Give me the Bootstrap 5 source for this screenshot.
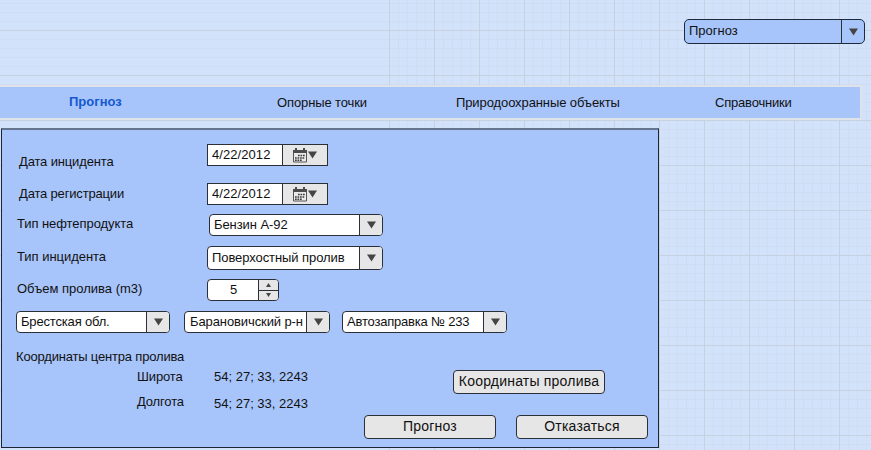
<!DOCTYPE html>
<html lang="ru">
<head>
<meta charset="utf-8">
<meta name="viewport" content="width=device-width, initial-scale=1">
<title>Прогноз</title>
<link href="https://cdn.jsdelivr.net/npm/bootstrap@5.3.0/dist/css/bootstrap.min.css" rel="stylesheet">
<style>
  html, body { height: 450px; }
  body {
    font: 13px/16px "Liberation Sans", Arial, sans-serif;
    color: #111;
    overflow: hidden;
    background-color: #d3e2fb;
    background-image:
      linear-gradient(#c7d2e1 1px, transparent 1px),
      linear-gradient(90deg, #c7d2e1 1px, transparent 1px),
      linear-gradient(#cfdcf2 1px, transparent 1px),
      linear-gradient(90deg, #cfdcf2 1px, transparent 1px);
    background-size: 45px 45px, 45px 45px, 9px 9px, 9px 9px;
    background-position: 0 30px, 29px 0, 0 3px, 2px 0;
  }
  /* the left part of the sheet is ruled horizontally only */
  .sheet {
    height: 450px;
    background:
      linear-gradient(#c7d2e1 1px, transparent 1px) 0 30px / 389px 45px repeat-y,
      linear-gradient(#cfdcf2 1px, transparent 1px) 0 3px / 389px 9px repeat-y,
      linear-gradient(#d3e2fb, #d3e2fb) 0 0 / 389px 450px no-repeat;
  }
  .topbar { height: 85px; padding: 19px 6px 0 0; }
  .tabs-bar {
    width: 862px; height: 35px;
    background: #a8c5fb;
    border: solid #dfe2e8; border-width: 2px 2px 2px 0;
  }
  .tabs-bar .nav-link { flex: none; padding: 8px 0 0; color: #111; line-height: 16px; white-space: nowrap; }
  .tabs-bar .nav-link.active { color: #1559cf; font-weight: 700; padding-top: 7px; }
  .tab-1 { width: 208px; margin-left: 69px; }
  .tab-2 { width: 179px; letter-spacing: -.12px; }
  .tab-3 { width: 259px; letter-spacing: -.1px; }
  .tab-4 { letter-spacing: -.2px; }

  .panel {
    width: 658px; height: 320px; margin: 8px 0 0 1px; padding: 14px 10px 0 14px;
    background: #a8c5fb;
    border: 1px solid #1d2535; border-top: 2px solid #66758f;
  }
  .line-label { width: 191px; flex: none; }
  .line-1 { height: 39px; } .line-1 .line-label { padding: 10px 0 0 3px; letter-spacing: -.15px; }
  .line-2 { height: 31px; } .line-2 .line-label { padding: 3px 0 0 3px; letter-spacing: -.17px; }
  .line-3 { height: 32px; } .line-3 .line-label { padding: 2px 0 0 1px; width: 193px; letter-spacing: -.07px; }
  .line-4 { height: 33px; } .line-4 .line-label { padding: 3px 0 0 1px; letter-spacing: -.03px; }
  .line-5 { height: 32px; } .line-5 .line-label { padding: 2px 0 0 1px; }
  .line-6 { height: 38px; }

  .combo {
    height: 22px; flex: none; overflow: hidden; white-space: nowrap;
    background: #fff; border: 1px solid #2b2f38; border-radius: 4px;
  }
  .combo-text { flex: 1 1 0; min-width: 0; padding: 2px 0 0 4px; }
  .combo-arrow { width: 23px; background: #e6e6e6; border-left: 1px solid #2b2f38; }
  .combo-main { width: 181px; height: 25px; background: #a8c5fb; border-radius: 5px; border-color: #1d2a3c; }
  .combo-main .combo-text { padding-top: 3px; }
  .combo-main .combo-arrow { background: none; }
  .combo-date { width: 121px; border-radius: 0; }
  .combo-date .combo-text { letter-spacing: .07px; }
  .combo-date .combo-arrow { width: 45px; gap: 1px; padding-right: 1px; }
  .combo-oil { width: 174px; letter-spacing: -.08px; }
  .combo-kind { width: 176px; height: 24px; letter-spacing: -.08px; }
  .combo-kind .combo-text { padding-top: 3px; }
  .combo-region { width: 154px; letter-spacing: -.17px; margin-right: 14px; }
  .combo-district { width: 146px; margin-right: 12px; letter-spacing: -.1px; }
  .combo-district .combo-text { padding-left: 5px; }
  .combo-station { width: 165px; letter-spacing: -.2px; }
  .spin { width: 72px; }
  .spin .combo-text { padding-left: 1px; }
  .spin-keys { width: 20px; background: #e6e6e6; border-left: 1px solid #2b2f38; }
  .spin-keys > div + div { border-top: 1px solid #2b2f38; }

  .coords-title { letter-spacing: -.18px; height: 20px; }
  .coords { height: 46px; }
  .coord-names { width: 77px; margin-left: 121px; letter-spacing: -.15px; }
  .coord-gap-a { margin-bottom: 9px; } .coord-gap-b { margin-bottom: 11px; }
  .panel .btn {
    padding: 0 0 2px; height: 24px; flex: none;
    font-size: 14px; line-height: 18px; letter-spacing: .2px; color: #111;
    background: #e6e6e6; border: 1px solid #2b2f38; border-radius: 4px;
  }
  .panel .btn-point { width: 152px; margin: 1px 43px 0 auto; }
  .panel .btn-wide { width: 132px; }
  .actions { gap: 20px; }
</style>
</head>
<body>
<svg width="0" height="0" class="d-none">
  <symbol id="down" viewBox="0 0 9 8"><path d="M0 .5h9L4.500 7.500z" fill="#444"/></symbol>
  <symbol id="cal" viewBox="0 0 14 15">
    <path d="M0 2h14v3.500H0zM2 0h2v3H2zM10 0h2v3h-2z" fill="#4c4c4c"/>
    <path d="M.5 5v9h13V5" fill="#e9e9e9" stroke="#555"/>
    <path d="M5 7.500h7M2 10h10M2 12.300h7" stroke="#3c3c3c" stroke-width="1.600" stroke-dasharray="1.700 .8" fill="none"/>
  </symbol>
</svg>
<div class="sheet">
  <header class="topbar d-flex justify-content-end align-items-start">
    <div class="combo combo-main d-flex">
      <div class="combo-text">Прогноз</div>
      <div class="combo-arrow d-flex align-items-center justify-content-center"><svg width="9" height="8"><use href="#down"/></svg></div>
    </div>
  </header>

  <nav class="tabs-bar nav flex-nowrap">
    <a class="nav-link active tab-1" href="#">Прогноз</a>
    <a class="nav-link tab-2" href="#">Опорные точки</a>
    <a class="nav-link tab-3" href="#">Природоохранные объекты</a>
    <a class="nav-link tab-4" href="#">Справочники</a>
  </nav>

  <main class="panel">
    <div class="line-1 d-flex align-items-start">
      <div class="line-label">Дата инцидента</div>
      <div class="combo combo-date d-flex">
        <div class="combo-text">4/22/2012</div>
        <div class="combo-arrow d-flex align-items-center justify-content-center"><svg width="14" height="15"><use href="#cal"/></svg><svg width="9" height="8"><use href="#down"/></svg></div>
      </div>
    </div>
    <div class="line-2 d-flex align-items-start">
      <div class="line-label">Дата регистрации</div>
      <div class="combo combo-date d-flex">
        <div class="combo-text">4/22/2012</div>
        <div class="combo-arrow d-flex align-items-center justify-content-center"><svg width="14" height="15"><use href="#cal"/></svg><svg width="9" height="8"><use href="#down"/></svg></div>
      </div>
    </div>
    <div class="line-3 d-flex align-items-start">
      <div class="line-label">Тип нефтепродукта</div>
      <div class="combo combo-oil d-flex">
        <div class="combo-text">Бензин А-92</div>
        <div class="combo-arrow d-flex align-items-center justify-content-center"><svg width="9" height="8"><use href="#down"/></svg></div>
      </div>
    </div>
    <div class="line-4 d-flex align-items-start">
      <div class="line-label">Тип инцидента</div>
      <div class="combo combo-kind d-flex">
        <div class="combo-text">Поверхостный пролив</div>
        <div class="combo-arrow d-flex align-items-center justify-content-center"><svg width="9" height="8"><use href="#down"/></svg></div>
      </div>
    </div>
    <div class="line-5 d-flex align-items-start">
      <div class="line-label">Объем пролива (m3)</div>
      <div class="combo spin d-flex">
        <div class="combo-text text-center">5</div>
        <div class="spin-keys d-flex flex-column">
          <div class="flex-fill d-flex align-items-center justify-content-center"><svg width="5" height="4"><path d="M0 4h5L2.500 0z" fill="#444"/></svg></div>
          <div class="flex-fill d-flex align-items-center justify-content-center"><svg width="5" height="4"><path d="M0 0h5L2.500 4z" fill="#444"/></svg></div>
        </div>
      </div>
    </div>
    <div class="line-6 d-flex align-items-start">
      <div class="combo combo-region d-flex">
        <div class="combo-text">Брестская обл.</div>
        <div class="combo-arrow d-flex align-items-center justify-content-center"><svg width="9" height="8"><use href="#down"/></svg></div>
      </div>
      <div class="combo combo-district d-flex">
        <div class="combo-text">Барановичский р-н</div>
        <div class="combo-arrow d-flex align-items-center justify-content-center"><svg width="9" height="8"><use href="#down"/></svg></div>
      </div>
      <div class="combo combo-station d-flex">
        <div class="combo-text">Автозаправка № 233</div>
        <div class="combo-arrow d-flex align-items-center justify-content-center"><svg width="9" height="8"><use href="#down"/></svg></div>
      </div>
    </div>
    <div class="coords-title">Координаты центра пролива</div>
    <div class="coords d-flex align-items-start">
      <div class="coord-names">
        <div class="coord-gap-a">Широта</div>
        <div>Долгота</div>
      </div>
      <div>
        <div class="coord-gap-b">54; 27; 33, 2243</div>
        <div>54; 27; 33, 2243</div>
      </div>
      <button class="btn btn-point" type="button">Координаты пролива</button>
    </div>
    <div class="actions d-flex justify-content-end">
      <button class="btn btn-wide" type="button">Прогноз</button>
      <button class="btn btn-wide" type="button">Отказаться</button>
    </div>
  </main>
</div>
<script src="https://cdn.jsdelivr.net/npm/bootstrap@5.3.0/dist/js/bootstrap.bundle.min.js"></script>
</body>
</html>
